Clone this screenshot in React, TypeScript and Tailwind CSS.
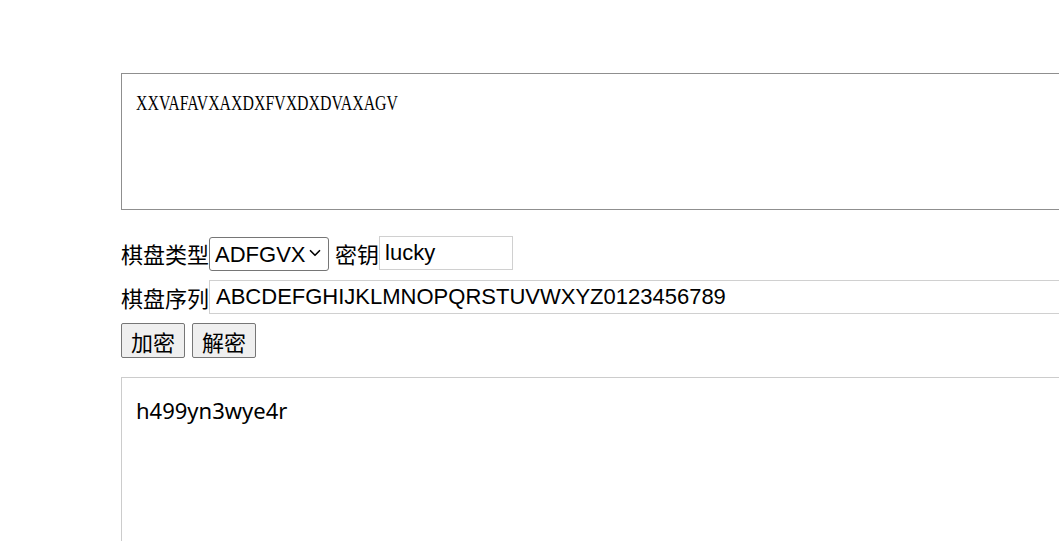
import { ChevronDown } from 'lucide-react'

const cjk = "font-['Noto_Sans_CJK_SC','Noto_Sans',sans-serif]"
const latin = "font-['Liberation_Sans','Noto_Sans_CJK_SC',sans-serif]"

export default function App() {
  return (
    <div className="h-[541px] w-full overflow-hidden bg-white pl-[121px] pt-[73px] text-black">
      {/* Cipher text */}
      <div className="h-[137px] w-[1000px] border border-[#8f8f8f] px-[14px] pt-[16px]">
        <span className="inline-block origin-left scale-x-[0.72] whitespace-nowrap font-['Liberation_Serif',serif] text-[22px] leading-[26px]">
          XXVAFAVXAXDXFVXDXDVAXAGV
        </span>
      </div>

      {/* Options */}
      <div className={`mt-[26px] flex h-[34px] items-center text-[22px] ${cjk}`}>
        <span className="shrink-0 whitespace-nowrap leading-none">棋盘类型</span>
        <div className="relative h-[34px] w-[120px] shrink-0">
          <select
            defaultValue="ADFGVX"
            className={`h-full w-full appearance-none rounded-[3px] border border-[#767676] bg-white pl-[5px] text-[22px] ${latin}`}
          >
            <option>ADFGVX</option>
            <option>ADFGX</option>
          </select>
          <ChevronDown
            className="pointer-events-none absolute right-[5px] top-[8px] h-[18px] w-[18px]"
            strokeWidth={2.2}
          />
        </div>
        <span className="ml-[6px] shrink-0 whitespace-nowrap leading-none">密钥</span>
        <input
          defaultValue="lucky"
          className={`h-[34px] w-[134px] shrink-0 border border-[#d0d0d0] px-[5px] text-[22px] outline-none ${latin}`}
        />
      </div>

      <div className={`mt-[10px] flex h-[34px] items-center text-[22px] ${cjk}`}>
        <span className="shrink-0 whitespace-nowrap leading-none">棋盘序列</span>
        <input
          defaultValue="ABCDEFGHIJKLMNOPQRSTUVWXYZ0123456789"
          className={`h-[34px] w-[900px] shrink-0 border border-[#d0d0d0] px-[6px] text-[22px] outline-none ${latin}`}
        />
      </div>

      <div className={`mt-[9px] flex gap-[7px] text-[22px] ${cjk}`}>
        <button className="h-[35px] w-[64px] rounded-[2px] border border-[#767676] bg-[#efefef] leading-none">
          加密
        </button>
        <button className="h-[35px] w-[64px] rounded-[2px] border border-[#767676] bg-[#efefef] leading-none">
          解密
        </button>
      </div>

      {/* Plain text */}
      <div className="mt-[19px] h-[200px] w-[1000px] border border-[#cccccc] px-[14px] pt-[17px]">
        <span className="font-['Noto_Sans',sans-serif] text-[22px] leading-[30px]">h499yn3wye4r</span>
      </div>
    </div>
  )
}
